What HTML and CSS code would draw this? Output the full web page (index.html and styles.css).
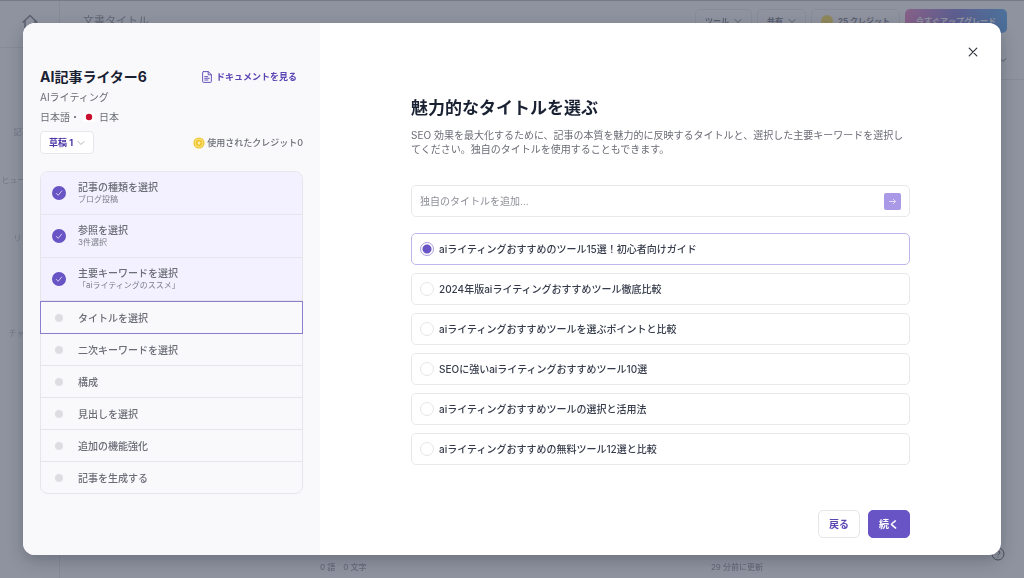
FILE: index.html
```html
<!DOCTYPE html>
<html lang="ja">
<head>
<meta charset="utf-8">
<meta name="viewport" content="width=device-width, initial-scale=1">
<title>AI記事ライター6</title>
<link rel="stylesheet" href="styles.css">
</head>
<body>
<div class="app">
  <nav class="rail">
    <a class="rail-home" href="#" aria-label="ホーム"><svg width="16" height="16" viewBox="0 0 16 16" fill="none" stroke="currentColor" stroke-width="1.4" stroke-linejoin="round" stroke-linecap="round"><path d="M1 8.200 8 1.500l7 6.700M3 6.500V14h10V6.500"/></svg></a>
    <div class="rail-links">
      <a class="rail-link" href="#">記事作成</a>
      <a class="rail-link" href="#">ヒューマナイズ</a>
      <a class="rail-link rail-link-rewrite" href="#">リライト</a>
      <a class="rail-link rail-link-chat" href="#">チャット AI</a>
    </div>
  </nav>
  <div class="editor">
    <header class="topbar">
      <span class="doc-title">文書タイトル</span>
      <div class="topbar-actions">
        <button class="tool" type="button">ツール <svg class="chev" viewBox="0 0 8 8"><path d="M1 2.500 4 5.500l3-3"/></svg></button>
        <button class="tool" type="button">共有 <svg class="chev" viewBox="0 0 8 8"><path d="M1 2.500 4 5.500l3-3"/></svg></button>
        <button class="tool" type="button"><span class="dot-coin"></span>25 クレジット</button>
        <button class="upgrade" type="button">今すぐアップグレード</button>
      </div>
    </header>
    <div class="formatbar"><svg class="chev" viewBox="0 0 8 8"><path d="M1 2.500 4 5.500l3-3"/></svg></div>
    <main class="page"></main>
    <footer class="status">
      <span class="counts"><span>0 語</span><span>0 文字</span></span>
      <span class="updated">29 分前に更新</span>
      <button class="help" type="button" aria-label="ヘルプ"><svg width="14" height="14" viewBox="0 0 14 14" fill="none" stroke="currentColor"><circle cx="7" cy="7" r="6"/><path d="M5.200 5.500a1.800 1.800 0 1 1 2.600 1.600c-.6.3-.8.6-.8 1.200M7 9.800v.8"/></svg></button>
    </footer>
  </div>
</div>

<div class="overlay">
  <div class="dialog" role="dialog" aria-modal="true" aria-labelledby="dialog-title">
    <aside class="side">
      <div class="side-head">
        <h2 class="side-title">AI記事ライター6</h2>
        <a class="doc-link" href="#"><svg width="10" height="12" viewBox="0 0 10 12" fill="none" stroke="currentColor" stroke-width=".9" stroke-linejoin="round" stroke-linecap="round"><path d="M1.500.6h4.800l3.100 3.100v6.700q0 1-1 1H1.600q-1 0-1-1V1.600q0-1 1-1M6.200.7v3.100h3.100M2.700 5.600h3M2.700 7.300h4.600M2.700 9h3.200"/></svg>ドキュメントを見る</a>
      </div>
      <p class="side-kind">AIライティング</p>
      <p class="side-locale">日本語・<svg class="flag" viewBox="0 0 12 10"><rect width="12" height="10" rx="1" fill="#fff"/><circle cx="6" cy="5" r="3.200" fill="#c8102e"/></svg>日本</p>
      <div class="side-meta">
        <button class="draft" type="button">草稿 1 <svg class="chev" viewBox="0 0 8 8"><path d="M1 2.500 4 5.500l3-3"/></svg></button>
        <span class="credits"><svg width="12" height="12" viewBox="0 0 12 12"><circle cx="6" cy="6" r="5.600" fill="#efc62f"/><circle cx="6" cy="6" r="4" fill="none" stroke="#fff3b0" stroke-width=".7"/><path d="M6 4.600v2.800M4.600 6h2.800" stroke="#fff8d0" stroke-width="1.200"/></svg>使用されたクレジット0</span>
      </div>
      <ol class="steps">
        <li class="step step-done"><span class="mark mark-done"><svg viewBox="0 0 14 14"><path d="m4.300 7.400 1.900 1.900 3.500-4.300"/></svg></span><span>記事の種類を選択<small class="note">ブログ投稿</small></span></li>
        <li class="step step-done"><span class="mark mark-done"><svg viewBox="0 0 14 14"><path d="m4.300 7.400 1.900 1.900 3.500-4.300"/></svg></span><span>参照を選択<small class="note">3件選択</small></span></li>
        <li class="step step-done"><span class="mark mark-done"><svg viewBox="0 0 14 14"><path d="m4.300 7.400 1.900 1.900 3.500-4.300"/></svg></span><span>主要キーワードを選択<small class="note">「aiライティングのススメ」</small></span></li>
        <li class="step step-current" aria-current="step"><span class="mark"></span>タイトルを選択</li>
        <li class="step"><span class="mark"></span>二次キーワードを選択</li>
        <li class="step"><span class="mark"></span>構成</li>
        <li class="step"><span class="mark"></span>見出しを選択</li>
        <li class="step"><span class="mark"></span>追加の機能強化</li>
        <li class="step"><span class="mark"></span>記事を生成する</li>
      </ol>
    </aside>
    <section class="content">
      <button class="close" type="button" aria-label="閉じる"><svg width="10" height="10" viewBox="0 0 10 10" stroke="currentColor" stroke-width="1.200" stroke-linecap="round"><path d="m1.200 1.200 7.600 7.600M8.800 1.200 1.200 8.800"/></svg></button>
      <form class="form">
        <h1 class="heading" id="dialog-title">魅力的なタイトルを選ぶ</h1>
        <p class="lead">SEO 効果を最大化するために、記事の本質を魅力的に反映するタイトルと、選択した主要キーワードを選択してください。独自のタイトルを使用することもできます。</p>
        <div class="custom">
          <input class="custom-input" type="text" aria-label="独自のタイトル" placeholder="独自のタイトルを追加...">
          <button class="custom-add" type="button" aria-label="追加"><svg width="9" height="9" viewBox="0 0 9 9" fill="none" stroke="currentColor" stroke-width=".8" stroke-linecap="round" stroke-linejoin="round"><path d="M1.500 4.500h6M5.300 2.300l2.200 2.200-2.200 2.200"/></svg></button>
        </div>
        <div class="options" role="radiogroup" aria-labelledby="dialog-title">
          <label class="option"><input class="radio" type="radio" name="title" checked>aiライティングおすすめのツール15選！初心者向けガイド</label>
          <label class="option"><input class="radio" type="radio" name="title">2024年版aiライティングおすすめツール徹底比較</label>
          <label class="option"><input class="radio" type="radio" name="title">aiライティングおすすめツールを選ぶポイントと比較</label>
          <label class="option"><input class="radio" type="radio" name="title">SEOに強いaiライティングおすすめツール10選</label>
          <label class="option"><input class="radio" type="radio" name="title">aiライティングおすすめツールの選択と活用法</label>
          <label class="option"><input class="radio" type="radio" name="title">aiライティングおすすめの無料ツール12選と比較</label>
        </div>
        <div class="actions">
          <button class="btn" type="button">戻る</button>
          <button class="btn btn-primary" type="submit">続く</button>
        </div>
      </form>
    </section>
  </div>
</div>
</body>
</html>
```
FILE: styles.css
```css
* { box-sizing: border-box; }
body {
  margin: 0;
  font: 10px/14px Inter, "Noto Sans CJK JP", sans-serif;
  color: #6b6d76;
  background: #fff;
}
h1, h2, p, ol { margin: 0; padding: 0; }
button, input { font: inherit; color: inherit; margin: 0; }
button { cursor: pointer; }
a { color: inherit; text-decoration: none; }
svg { display: block; flex: none; }
.chev { width: 8px; height: 8px; fill: none; stroke: currentColor; stroke-width: 1; stroke-linecap: round; stroke-linejoin: round; }

/* Editor behind the dialog */
.app { display: flex; height: 100vh; border-top: 1px solid #bbb; overflow: hidden; color: #70747e; opacity: .75; }
.rail { width: 60px; flex: none; border-right: 1px solid #e8e8ec; }
.rail-home { display: flex; justify-content: center; height: 47px; padding-top: 13px; border-bottom: 1px solid #e8e8ec; }
.rail-links { display: grid; gap: 34px; padding-top: 77px; justify-items: center; font-size: 8px; color: #b0b3ba; white-space: nowrap; }
.rail-link-rewrite { margin-top: 10px; }
.rail-link-chat { margin-top: 47px; }
.editor { flex: 1; min-width: 0; display: flex; flex-direction: column; }
.topbar { display: flex; align-items: center; justify-content: space-between; height: 39px; padding: 0 17px 0 23px; }
.doc-title { font-size: 11px; color: #858891; }
.topbar-actions { display: flex; gap: 5px; }
.tool { display: flex; align-items: center; gap: 5px; height: 24px; padding: 0 9px; border: 1px solid #e8e8ec; border-radius: 5px; background: #fff; font-size: 8px; font-weight: 700; white-space: nowrap; }
.dot-coin { width: 12px; height: 12px; border-radius: 50%; background: #ffe14d; }
.upgrade { height: 24px; padding: 0 11px; border: 0; border-radius: 5px; color: #fff; background: linear-gradient(90deg, #e879c3, #7773d6 50%, #4ba3f2); font-size: 8px; font-weight: 700; white-space: nowrap; }
.formatbar { display: flex; justify-content: flex-end; align-items: center; height: 40px; padding: 0 17px; border-bottom: 1px solid #e8e8ec; }
.page { flex: 1; }
.status { display: flex; align-items: center; justify-content: space-between; padding: 0 19px 0 260px; height: 49px; font-size: 8px; color: #92959c; font-weight: 500; }
.counts { display: flex; gap: 8px; padding-top: 27px; }
.updated { margin: 0 228px 0 auto; padding-top: 27px; }
.help { padding: 0; border: 0; background: none; color: #444; }

/* Dialog */
.overlay { position: fixed; inset: 0; display: flex; padding: 23px; background: rgba(31, 39, 63, .5); }
.dialog { flex: 1; min-width: 0; display: flex; border-radius: 12px; overflow: hidden; background: #fff; box-shadow: 0 6px 16px rgba(20, 25, 40, .25); }
.side { width: 297px; flex: none; padding: 44px 17px 0; background: #f9f9fc; }
.side-head { display: flex; align-items: center; justify-content: space-between; padding-right: 6px; }
.side-title { font-size: 14px; line-height: 20px; font-weight: 700; color: #192132; }
.doc-link { display: flex; align-items: center; gap: 4px; font-size: 9px; font-weight: 700; color: #5b44b4; }
.side-kind { margin-top: 3px; }
.side-locale { display: flex; align-items: center; margin-top: 6px; }
.flag { width: 12px; height: 10px; margin: 0 4px 0 3px; }
.side-meta { display: flex; align-items: center; justify-content: space-between; margin-top: 7px; }
.draft { display: flex; align-items: center; gap: 4px; height: 23px; padding: 0 8px; border: 1px solid #e6e6eb; border-radius: 4px; background: #fff; color: #4b34a8; font-size: 9px; font-weight: 700; }
.draft .chev { color: #b3b4bb; }
.credits { display: flex; align-items: center; gap: 2px; font-size: 9px; font-weight: 500; }
.steps { list-style: none; margin-top: 17px; border: 1px solid #e5e5ea; border-radius: 8px; }
.step { display: flex; align-items: center; gap: 12px; min-height: 32px; padding: 0 11px; border-bottom: 1px solid #e5e5ea; font-weight: 500; }
.step:last-child { min-height: 31px; border-bottom: 0; }
.step:first-child { border-radius: 7px 7px 0 0; }
.step-done { min-height: 43px; padding-bottom: 1px; background: #f3f1ff; }
.step-current { min-height: 33px; margin: 0 -1px; border: 1px solid #8c7dce; }
.note { display: block; font-size: 8px; line-height: 11px; font-weight: 400; color: #7c7e87; }
.mark { display: grid; place-items: center; width: 14px; height: 14px; flex: none; }
.mark::before { content: ""; width: 8px; height: 8px; border-radius: 50%; background: #dddde2; }
.mark-done { border-radius: 50%; background: #6854c4; }
.mark-done::before { content: none; }
.mark svg { width: 14px; height: 14px; fill: none; stroke: #ddd7ff; stroke-width: .9; stroke-linecap: round; stroke-linejoin: round; }

.content { flex: 1; min-width: 0; display: flex; flex-direction: column; padding: 20px 20px 17px 91px; }
.close { display: grid; place-items: center; align-self: flex-end; width: 17px; height: 17px; padding: 0; border: 0; background: none; color: #30343e; }
.form { flex: 1; display: flex; flex-direction: column; margin-right: 71px; padding-top: 35px; }
.heading { font-size: 17px; line-height: 26px; font-weight: 700; color: #192132; }
.lead { margin-top: 7px; }
.custom { display: flex; align-items: center; height: 32px; margin-top: 29px; padding: 0 8px; border: 1px solid #e8e8ec; border-radius: 5px; }
.custom-input { flex: 1; min-width: 0; height: 30px; padding: 0; border: 0; outline: 0; background: none; }
.custom-input::placeholder { color: #8e9098; opacity: 1; }
.custom-add { display: grid; place-items: center; width: 17px; height: 17px; padding: 0; border: 0; border-radius: 2px; background: #a999e6; color: #f1edff; }
.options { display: grid; gap: 8px; margin-top: 16px; }
.option { display: flex; align-items: center; gap: 5px; height: 32px; padding: 0 8px; border: 1px solid #e8e8ec; border-radius: 5px; font-weight: 500; color: #353b4a; }
.option:has(:checked) { border-color: #c0b6ec; }
.radio { appearance: none; width: 14px; height: 14px; flex: none; margin: 0; border: 1px solid #e5e5ea; border-radius: 50%; background: #fff; }
.radio:checked { border-color: #a99ddd; background: radial-gradient(circle, #6854c4 0 4px, #fff 5px); }
.actions { display: flex; justify-content: flex-end; gap: 8px; margin-top: auto; }
.btn { height: 28px; padding: 0 10px; border: 1px solid #e5e5ea; border-radius: 5px; background: #fff; color: #5b44b4; font-weight: 700; }
.btn-primary { border-color: #6854c4; background: #6854c4; color: #fff; }
```
